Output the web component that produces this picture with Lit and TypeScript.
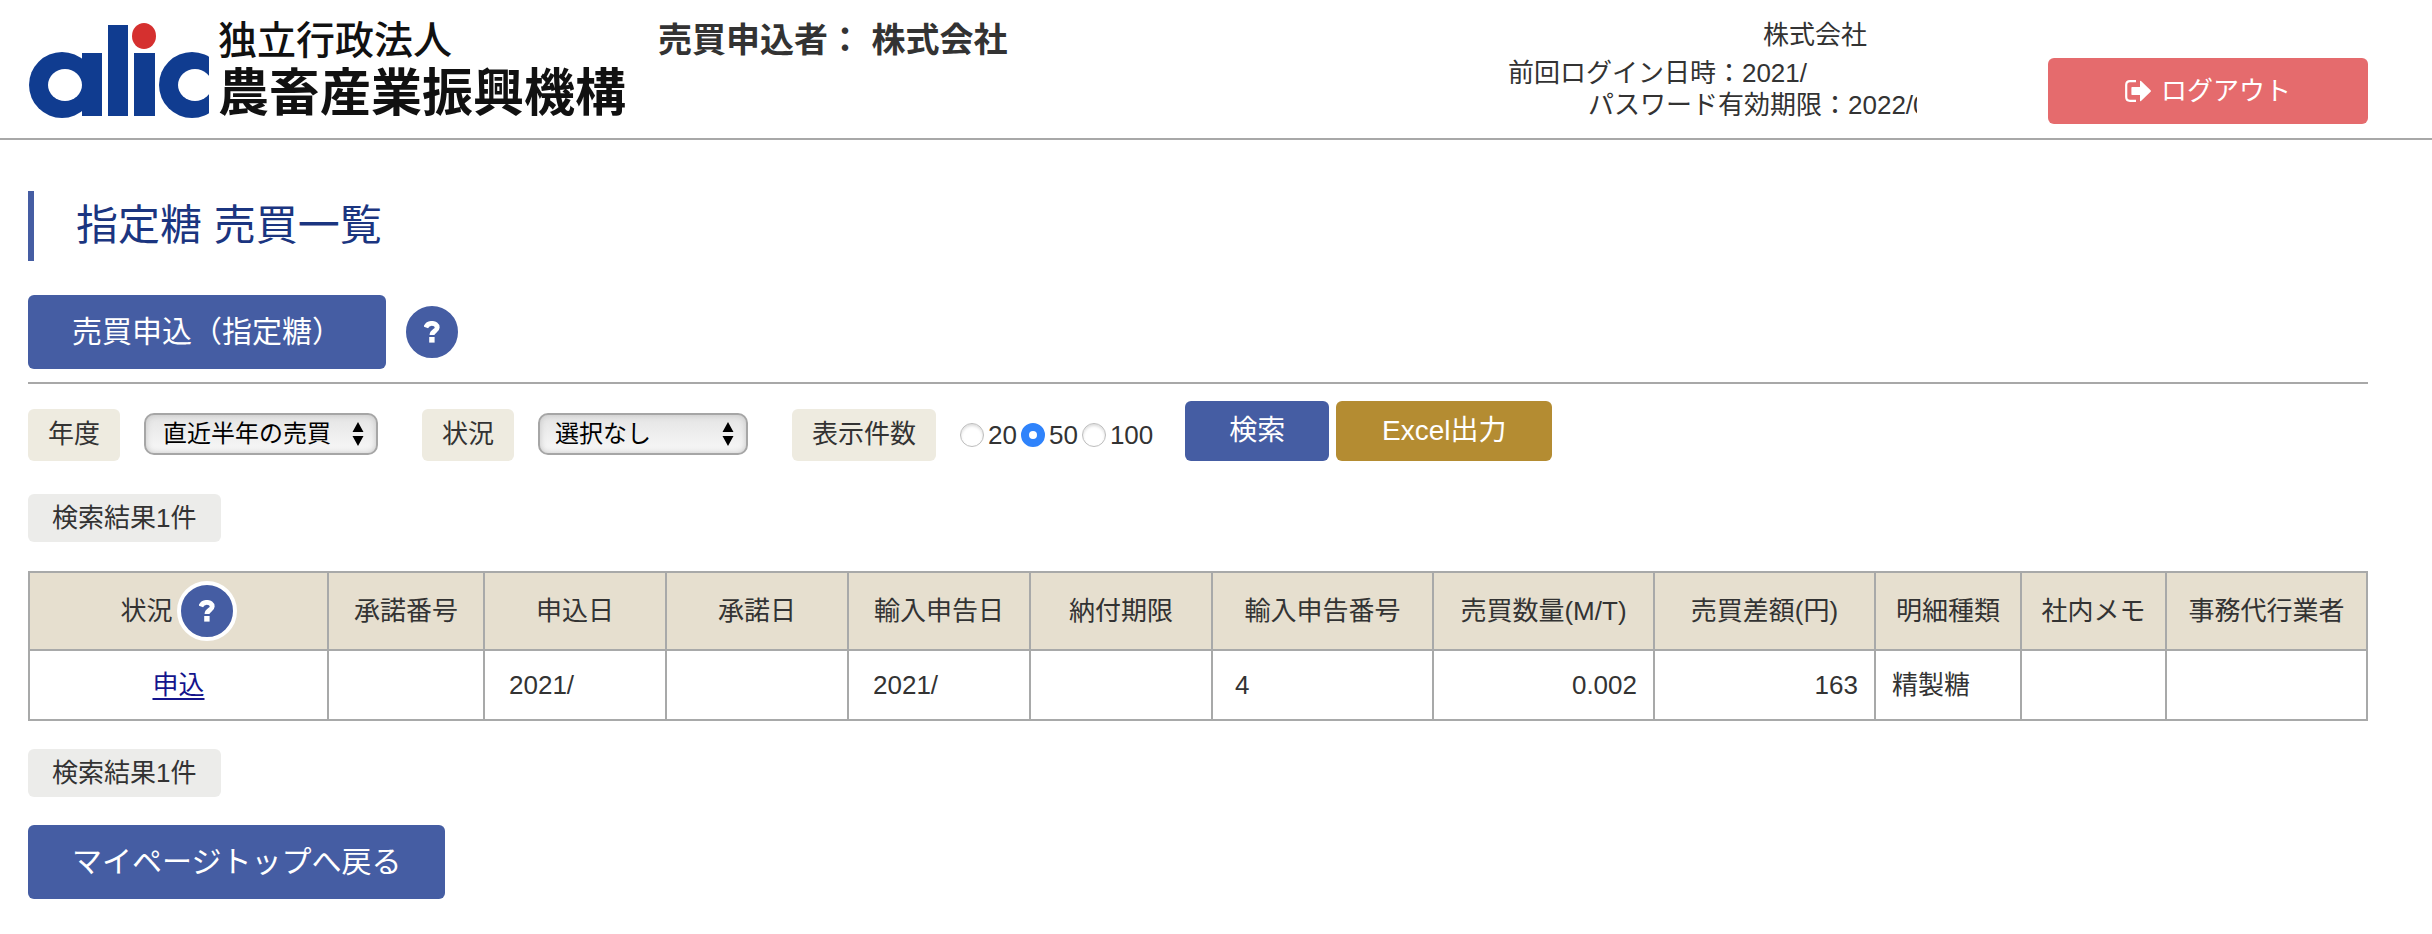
import { LitElement, html, css, svg } from "lit";
import { customElement, property, state } from "lit/decorators.js";

type Align = "start" | "date" | "number" | "center" | "end";

interface Column {
  label: string;
  share: number;
  align: Align;
  help?: boolean;
}

const COLUMNS: Column[] = [
  { label: "状況", share: 299, align: "center", help: true },
  { label: "承諾番号", share: 156, align: "start" },
  { label: "申込日", share: 182, align: "date" },
  { label: "承諾日", share: 182, align: "date" },
  { label: "輸入申告日", share: 182, align: "date" },
  { label: "納付期限", share: 182, align: "date" },
  { label: "輸入申告番号", share: 221, align: "number" },
  { label: "売買数量(M/T)", share: 221, align: "end" },
  { label: "売買差額(円)", share: 221, align: "end" },
  { label: "明細種類", share: 146, align: "start" },
  { label: "社内メモ", share: 145, align: "start" },
  { label: "事務代行業者", share: 201, align: "start" },
];

const ROWS: string[][] = [
  ["申込", "", "2021/", "", "2021/", "", "4", "0.002", "163", "精製糖", "", ""],
];

const TOTAL = COLUMNS.reduce((sum, c) => sum + c.share, 0);

@customElement("help-button")
class HelpButton extends LitElement {
  static styles = css`
    :host {
      display: inline-flex;
    }
    .help {
      display: grid;
      place-items: center;
      width: 60px;
      height: 60px;
      padding: 0;
      border: 4px solid #fff;
      border-radius: 50%;
      background: #455da3;
      cursor: pointer;
    }
    .mark {
      width: 16px;
      height: 22px;
    }
  `;

  render() {
    return html`<button class="help" type="button" aria-label="ヘルプ">
      <svg class="mark" viewBox="0 0 16 22" aria-hidden="true">
        <path d="M1.800 6.400C3 3.600 5 2.400 7.800 2.400c3.200 0 5.400 1.500 5.400 4 0 3.600-5.200 3.600-5.200 7.600" fill="none" stroke="#fff" stroke-width="4.900" />
        <rect x="5.200" y="16" width="5.400" height="5.600" fill="#fff" />
      </svg>
    </button>`;
  }
}

@customElement("pull-down")
class PullDown extends LitElement {
  @property() label = "";
  @property({ attribute: false }) options: string[] = [];

  static styles = css`
    :host {
      display: inline-flex;
      align-items: flex-end;
      gap: 24px;
    }
    .tag {
      padding: 0 20px 2px;
      border-radius: 6px;
      background: #eeebe0;
      line-height: 50px;
      white-space: nowrap;
    }
    .box {
      display: grid;
      align-items: center;
      margin-bottom: 6px;
    }
    .select {
      grid-area: 1 / 1;
      appearance: none;
      height: 42px;
      padding: 0 45px 0 17px;
      border: 2px solid #a6a6a6;
      border-radius: 10px;
      background: linear-gradient(#e4e4e4, #f8f8f8);
      box-shadow: inset 0 0 6px #c4c4c4;
      color: #000;
      font: inherit;
      font-size: 24px;
      line-height: 36px;
    }
    .wide {
      width: 210px;
      padding-left: 15px;
    }
    .arrows {
      grid-area: 1 / 1;
      justify-self: end;
      width: 12px;
      height: 24px;
      margin-right: 14px;
      pointer-events: none;
    }
  `;

  render() {
    return html`
      <label class="tag" for="field">${this.label}</label>
      <span class="box">
        <select class="select ${this.options[0].length < 6 ? "wide" : ""}" id="field">
          ${this.options.map((o) => html`<option>${o}</option>`)}
        </select>
        <svg class="arrows" viewBox="0 0 12 24" aria-hidden="true">
          <path d="M6 0l5.500 10H.5zM6 24l5.500-10H.5z" />
        </svg>
      </span>
    `;
  }
}

@customElement("app-root")
class AppRoot extends LitElement {
  @state() private perPage = 50;

  static styles = css`
    :host {
      display: block;
      color: #333;
      background: #fff;
      font-family: "Liberation Sans", "Noto Sans CJK JP", sans-serif;
      font-size: 26px;
      line-height: 32px;
    }
    *,
    *::before {
      box-sizing: border-box;
    }
    .header {
      display: flex;
      align-items: flex-start;
      min-height: 140px;
      padding: 0 64px 0 28px;
      border-bottom: 2px solid #a8a8a8;
      white-space: nowrap;
    }
    .logo {
      display: flex;
      gap: 8px;
      width: 604px;
      padding-top: 18px;
      color: #111;
      font-weight: 500;
    }
    .emblem {
      width: 182px;
      height: 104px;
    }
    .org {
      display: block;
      font-size: 39px;
      line-height: 46px;
    }
    .name {
      display: block;
      font-size: 51px;
      line-height: 60px;
      font-weight: 700;
    }
    .applicant {
      margin: 0 0 0 26px;
      padding-top: 18px;
      font-size: 34px;
      line-height: 44px;
    }
    .info {
      display: flex;
      flex-direction: column;
      align-items: flex-end;
      margin-left: auto;
      padding-top: 19px;
    }
    .company {
      margin-bottom: 6px;
      padding-right: 50px;
    }
    .login {
      padding-right: 110px;
    }
    .expiry {
      width: 329px;
      overflow: hidden;
    }
    .logout {
      display: flex;
      align-items: center;
      justify-content: center;
      gap: 10px;
      width: 320px;
      height: 66px;
      margin: 58px 0 0 131px;
      border: 0;
      border-radius: 6px;
      background: #e56b6d;
      color: #fff;
      font: inherit;
      cursor: pointer;
    }
    .exit {
      width: 26px;
      height: 22px;
    }
    .main {
      padding: 51px 64px 35px 28px;
    }
    .title {
      margin: 0 0 34px;
      padding-left: 42px;
      border-left: 6px solid #455da3;
      color: #1b3580;
      font-size: 42px;
      font-weight: 400;
      line-height: 70px;
    }
    .actions {
      display: flex;
      align-items: center;
      gap: 16px;
      padding-bottom: 13px;
      border-bottom: 2px solid #a8a8a8;
    }
    .button {
      padding: 0 44px;
      border: 0;
      border-radius: 6px;
      background: #455da3;
      color: #fff;
      font: inherit;
      font-size: 30px;
      line-height: 74px;
      white-space: nowrap;
      cursor: pointer;
    }
    .compact {
      font-size: 28px;
      line-height: 60px;
    }
    .export {
      min-width: 216px;
      background: #b48c32;
    }
    .filters {
      display: flex;
      flex-wrap: wrap;
      align-items: flex-end;
      gap: 44px;
      margin: 17px 0 33px;
    }
    .group {
      display: flex;
      align-items: center;
      gap: 24px;
      margin: 0;
      padding: 0;
      border: 0;
    }
    .tag {
      padding: 0 20px 2px;
      border-radius: 6px;
      background: #eeebe0;
      line-height: 50px;
    }
    .choices {
      display: flex;
      gap: 4px;
    }
    .choice {
      display: flex;
      align-items: center;
      gap: 4px;
    }
    .radio {
      appearance: none;
      width: 24px;
      height: 24px;
      margin: 0;
      border: 1px solid #bdbdbd;
      border-radius: 50%;
      background: #fff;
      box-shadow: inset 0 2px 3px #ddd;
    }
    .radio:checked {
      border: 8px solid #2f83fb;
      box-shadow: none;
    }
    .submit {
      display: flex;
      gap: 7px;
      margin-left: -12px;
    }
    .count {
      display: block;
      width: fit-content;
      padding: 0 24px;
      border-radius: 6px;
      background: #ececea;
      line-height: 48px;
    }
    .table {
      width: 100%;
      margin: 29px 0 28px;
      border-collapse: collapse;
      table-layout: fixed;
    }
    .head,
    .cell {
      border: 2px solid #a8a9a9;
      padding: 0 16px;
    }
    .head {
      height: 78px;
      padding: 0;
      background: #e6dfcf;
      font-weight: 400;
      text-align: center;
      white-space: nowrap;
    }
    .heading {
      display: flex;
      align-items: center;
      justify-content: center;
      gap: 4px;
    }
    .cell {
      height: 70px;
      text-align: left;
    }
    .date {
      padding-left: 24px;
    }
    .number {
      padding-left: 22px;
    }
    .end {
      text-align: right;
    }
    .center {
      text-align: center;
    }
    .link {
      color: #14148c;
      text-underline-offset: 4px;
    }
    .back {
      display: block;
      margin-top: 28px;
    }
  `;

  private logo() {
    return svg`
      <defs>
        <clipPath id="cut"><rect x="130" y="0" width="51" height="104" /></clipPath>
      </defs>
      <g fill="#103c90">
        <ellipse cx="34" cy="67" rx="33" ry="33" />
        <rect x="54" y="35" width="20" height="63" />
        <rect x="80" y="7" width="20" height="91" />
        <rect x="106" y="35" width="21" height="63" />
        <ellipse cx="164" cy="67" rx="33" ry="33" clip-path="url(#cut)" />
      </g>
      <ellipse cx="37" cy="67" rx="17" ry="16" fill="#fff" />
      <ellipse cx="167" cy="67" rx="17" ry="16" fill="#fff" />
      <ellipse cx="116" cy="18" rx="12" ry="13" fill="#d5302f" />
    `;
  }

  private cell(value: string, column: Column) {
    return html`<td class="cell ${column.align}">
      ${column.help ? html`<a class="link" href="#">${value}</a>` : value}
    </td>`;
  }

  render() {
    return html`
      <header class="header">
        <div class="logo">
          <svg class="emblem" viewBox="0 0 182 104" role="img" aria-label="alic">${this.logo()}</svg>
          <div>
            <span class="org">独立行政法人</span>
            <span class="name">農畜産業振興機構</span>
          </div>
        </div>
        <h2 class="applicant">売買申込者： 株式会社</h2>
        <div class="info">
          <span class="company">株式会社</span>
          <span class="login">前回ログイン日時：2021/</span>
          <span class="expiry">パスワード有効期限：2022/0</span>
        </div>
        <button class="logout" type="button">
          <svg class="exit" viewBox="0 0 26 22" aria-hidden="true">
            <path d="M11 1.200H5Q1.200 1.200 1.200 5v12q0 3.800 3.800 3.800h6" fill="none" stroke="#fff" stroke-width="2.200" />
            <path d="M7 7h8V1.600q0-1.200 1-.5l9.600 9.100q.7.800 0 1.600L16 20.900q-1 .7-1-.5V15H7q-.6 0-.6-.8V7.800Q6.400 7 7 7z" fill="#fff" />
          </svg>
          ログアウト
        </button>
      </header>
      <main class="main">
        <h1 class="title">指定糖 売買一覧</h1>
        <div class="actions">
          <button class="button" type="button">売買申込（指定糖）</button>
          <help-button></help-button>
        </div>
        <form class="filters" @submit=${(e: Event) => e.preventDefault()}>
          <pull-down label="年度" .options=${["直近半年の売買"]}></pull-down>
          <pull-down label="状況" .options=${["選択なし"]}></pull-down>
          <div class="group" role="radiogroup" aria-labelledby="per-page">
            <span class="tag" id="per-page">表示件数</span>
            <div class="choices">
              ${[20, 50, 100].map(
                (n) => html`<label class="choice">
                  <input class="radio" type="radio" name="count" .checked=${this.perPage === n} @change=${() => (this.perPage = n)} />${n}
                </label>`
              )}
            </div>
          </div>
          <div class="submit">
            <button class="button compact" type="submit">検索</button>
            <button class="button compact export" type="button">Excel出力</button>
          </div>
        </form>
        <span class="count">検索結果${ROWS.length}件</span>
        <table class="table">
          <colgroup>
            ${COLUMNS.map((c) => html`<col style="width:${(c.share / TOTAL) * 100}%" />`)}
          </colgroup>
          <thead>
            <tr>
              ${COLUMNS.map(
                (c) => html`<th class="head" scope="col">
                  ${c.help ? html`<span class="heading">${c.label}<help-button></help-button></span>` : c.label}
                </th>`
              )}
            </tr>
          </thead>
          <tbody>
            ${ROWS.map((row) => html`<tr>${row.map((v, i) => this.cell(v, COLUMNS[i]))}</tr>`)}
          </tbody>
        </table>
        <span class="count">検索結果${ROWS.length}件</span>
        <button class="button back" type="button">マイページトップへ戻る</button>
      </main>
    `;
  }
}
